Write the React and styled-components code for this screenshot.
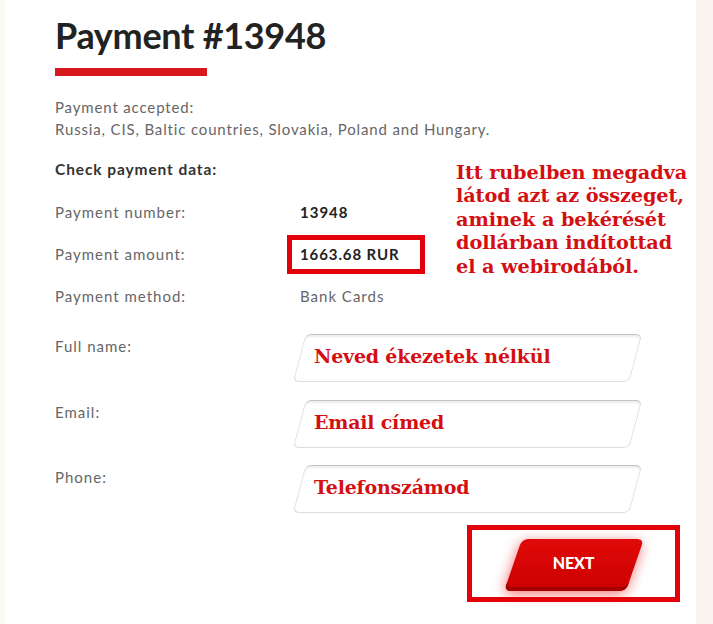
import styled, { createGlobalStyle } from "styled-components"

const GlobalStyle = createGlobalStyle`
  body {
    margin: 0;
    background: #f9f4ef;
    font-family: Lato, "Open Sans", sans-serif;
  }
`

const Page = styled.div`
  display: flex;
  width: 713px;
  height: 624px;
  overflow: hidden;
`

const Strip = styled.div`
  width: ${(p) => p.w}px;
  flex-shrink: 0;
  background: ${(p) => p.bg};
`

const Sheet = styled.div`
  width: 691px;
  flex-shrink: 0;
  background: #ffffff;
  padding: 13px 0 0 50px;
  box-sizing: border-box;
`

const Title = styled.h1`
  margin: 0;
  font-size: 36px;
  line-height: 44px;
  font-weight: 700;
  color: #222;
  letter-spacing: -0.3px;
`

const TitleBar = styled.div`
  width: 152px;
  height: 8px;
  margin-top: 11px;
  background: #d7181f;
`

const Accepted = styled.p`
  margin: 20px 0 0;
  font-size: 15px;
  line-height: 22px;
  color: #666;
  font-weight: 400;
  letter-spacing: 0.85px;
`

const DataArea = styled.div`
  display: flex;
  margin-top: 18px;
`

const DataTable = styled.div`
  width: 385px;
  flex-shrink: 0;
`

const Heading = styled.div`
  font-size: 15.5px;
  font-weight: 700;
  color: #333;
  line-height: 22px;
  letter-spacing: 0.9px;
`

const DataRow = styled.div`
  display: grid;
  grid-template-columns: 245px auto;
  align-items: center;
  height: 42px;
  margin-top: ${(p) => p.first ? 11 : 0}px;
`

const Label = styled.div`
  font-size: 15px;
  color: #666;
  letter-spacing: 1px;
`

const Value = styled.div`
  font-size: 15px;
  color: ${(p) => p.bold ? "#222" : "#666"};
  font-weight: ${(p) => p.bold ? 700 : 400};
  letter-spacing: 1px;
`

const Highlight = styled.div`
  justify-self: start;
  margin-left: -13px;
  height: 29px;
  border: 5px solid #e4000b;
  display: flex;
  align-items: center;
  padding: 0 20px 0 8px;
  font-size: 15px;
  font-weight: 700;
  color: #222;
  letter-spacing: 0.9px;
`

const Note = styled.div`
  margin-left: 16px;
  margin-top: 3px;
  font-family: "DejaVu Serif", Georgia, serif;
  font-weight: 700;
  font-size: 19.3px;
  line-height: 23.4px;
  color: #d40f12;
  letter-spacing: -0.1px;
  white-space: nowrap;
`

const Form = styled.div`
  margin-top: 17px;
`

const FormRow = styled.div`
  display: grid;
  grid-template-columns: 244px auto;
  height: 65.5px;
`

const FormLabel = styled.div`
  font-size: 15px;
  color: #666;
  padding-top: 3px;
  letter-spacing: 1px;
`

const Field = styled.div`
  position: relative;
  width: 337px;
  height: 48px;
  display: flex;
  align-items: center;
  padding-left: 15px;
  box-sizing: border-box;
  font-family: "DejaVu Serif", Georgia, serif;
  font-weight: 700;
  font-size: 19px;
  color: #d40f12;
  letter-spacing: -0.2px;

  &::before {
    content: "";
    position: absolute;
    inset: 0;
    transform: skewX(-15deg);
    border: 1px solid #dedede;
    border-top-color: #c4c4c4;
    border-radius: 6px;
    box-shadow: inset 0 2px 2px rgba(0, 0, 0, 0.08);
    background: #fff;
  }

  span {
    position: relative;
    margin-top: -4px;
  }
`

const Footer = styled.div`
  display: flex;
  justify-content: flex-end;
  padding-right: 16px;
  margin-top: -6px;
`

const NextFrame = styled.div`
  width: 203px;
  height: 67px;
  border: 5px solid #e4000b;
  display: flex;
  align-items: center;
  justify-content: center;
`

const NextButton = styled.button`
  position: relative;
  width: 122px;
  height: 52px;
  margin-top: 4px;
  border: none;
  background: none;
  padding: 0 0 5px;
  font-family: Lato, sans-serif;
  font-weight: 900;
  font-size: 16px;
  color: #fff;
  letter-spacing: -0.2px;

  &::before {
    content: "";
    position: absolute;
    inset: 0;
    transform: skewX(-19deg);
    border-radius: 6px;
    background: linear-gradient(#e00a0a, #cc0000);
    box-shadow: inset 0 -4px 0 #a30000, 0 3px 12px rgba(235, 0, 0, 0.55);
  }

  span {
    position: relative;
  }
`

const rows = [
  { label: "Payment number:", value: "13948", bold: true },
  { label: "Payment amount:", value: "1663.68 RUR", boxed: true },
  { label: "Payment method:", value: "Bank Cards" },
]

const fields = [
  { label: "Full name:", hint: "Neved ékezetek nélkül" },
  { label: "Email:", hint: "Email címed" },
  { label: "Phone:", hint: "Telefonszámod" },
]

export default function App() {
  return (
    <>
      <GlobalStyle />
      <Page>
        <Strip w={5} bg="#fdf9f5" />
        <Sheet>
          <Title>Payment #13948</Title>
          <TitleBar />
          <Accepted>
            Payment accepted:<br />
            Russia, CIS, Baltic countries, Slovakia, Poland and Hungary.
          </Accepted>

          <DataArea>
            <DataTable>
              <Heading>Check payment data:</Heading>
              {rows.map((r, i) => (
                <DataRow key={i} first={i === 0}>
                  <Label>{r.label}</Label>
                  {r.boxed
                    ? <Highlight>{r.value}</Highlight>
                    : <Value bold={r.bold}>{r.value}</Value>}
                </DataRow>
              ))}
            </DataTable>
            <Note>
              Itt rubelben megadva<br />
              látod azt az összeget,<br />
              aminek a bekérését<br />
              dollárban indítottad<br />
              el a webirodából.
            </Note>
          </DataArea>

          <Form>
            {fields.map((f, i) => (
              <FormRow key={i}>
                <FormLabel>{f.label}</FormLabel>
                <Field><span>{f.hint}</span></Field>
              </FormRow>
            ))}
          </Form>

          <Footer>
            <NextFrame>
              <NextButton><span>NEXT</span></NextButton>
            </NextFrame>
          </Footer>
        </Sheet>
        <Strip w={17} bg="#f9f4ef" />
      </Page>
    </>
  )
}
